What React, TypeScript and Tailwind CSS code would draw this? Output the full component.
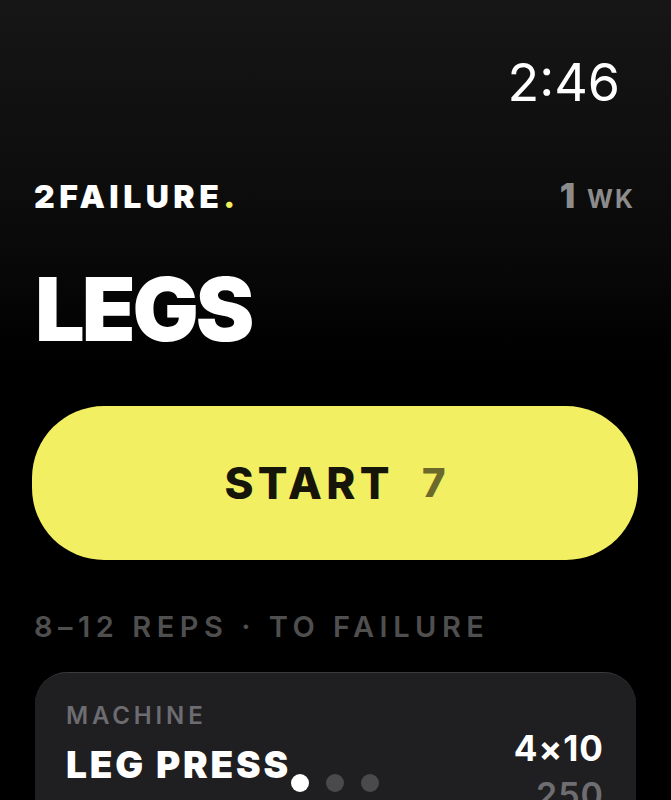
const font = { fontFamily: "Inter, 'Noto Sans', sans-serif" };

const PageDots = () => (
  <div className="absolute left-[291px] top-[774px] flex gap-[17px]">
    <span className="h-[18px] w-[18px] rounded-full bg-white" />
    <span className="h-[18px] w-[18px] rounded-full bg-[#4a4a4c]" />
    <span className="h-[18px] w-[18px] rounded-full bg-[#4a4a4c]" />
  </div>
);

const ExerciseCard = () => (
  <div className="mx-[3px] mt-[31px] flex justify-between rounded-[32px] border-t border-[#3a3a3c] bg-[#1f1f21] pl-[31px] pr-[32px] pt-[31px] pb-[40px]">
    <div className="flex flex-col">
      <span className="text-[24px] font-semibold leading-none tracking-[0.16em] text-[#6d6c71]">MACHINE</span>
      <span className="mt-[18px] text-[37px] font-black leading-none tracking-[0.075em] text-white">LEG PRESS</span>
    </div>
    <div className="flex flex-col items-end pt-[27px]">
      <span className="text-[35px] font-bold leading-none tracking-[0.03em] text-white">4×10</span>
      <span className="mt-[12px] text-[34px] font-semibold leading-none tracking-[0.03em] text-[#6e6e72]">250</span>
    </div>
  </div>
);

export default function App() {
  return (
    <div
      style={font}
      className="relative h-[800px] w-[671px] overflow-hidden bg-[linear-gradient(180deg,#161616_0%,#0a0a0a_30%,#000_45%)] px-[32px]"
    >
      <div className="flex justify-end pr-[19px] pt-[57px]">
        <span className="text-[52px] font-normal leading-none text-white">2:46</span>
      </div>

      <div className="mt-[70px] flex items-baseline justify-between pl-[2px] pr-[4px]">
        <span className="text-[32px] font-black leading-none tracking-[0.14em] text-white">
          2FAILURE<span className="text-[#f2ee5e]">.</span>
        </span>
        <span className="flex items-baseline gap-[12px] text-[#8c8c8c]">
          <span className="text-[34px] font-black leading-none">1</span>
          <span className="text-[25px] font-bold leading-none tracking-[0.08em]">WK</span>
        </span>
      </div>

      <h1 className="mt-[52px] pl-[3px] text-[88px] font-black leading-none tracking-[-0.035em] text-white">LEGS</h1>

      <button className="mt-[53px] flex h-[154px] w-[606px] items-center justify-center gap-[28px] rounded-[72px] bg-[#f2ef62]">
        <span className="text-[44px] font-extrabold leading-none tracking-[0.1em] text-[#16150a]">START</span>
        <span className="text-[40px] font-extrabold leading-none text-[#6c6a2a]">7</span>
      </button>

      <p className="mt-[52px] pl-[2px] text-[29px] font-semibold leading-none tracking-[0.19em] text-[#4f4f4f]">
        8–12 REPS · TO FAILURE
      </p>

      <ExerciseCard />
      <PageDots />
    </div>
  );
}
